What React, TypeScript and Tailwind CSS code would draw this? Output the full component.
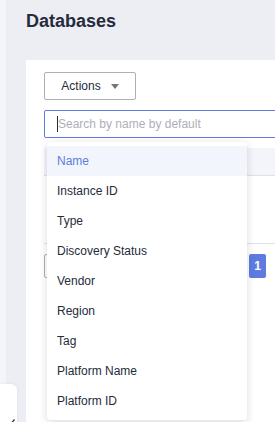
import React from "react";

const items = [
  "Name",
  "Instance ID",
  "Type",
  "Discovery Status",
  "Vendor",
  "Region",
  "Tag",
  "Platform Name",
  "Platform ID",
];

export default function App() {
  return (
    <div
      className="relative w-[275px] h-[422px] overflow-hidden bg-[#eceef3] flex"
      style={{ fontFamily: '"Liberation Sans", Arial, sans-serif' }}
    >
      <div className="w-[6px] shrink-0 bg-[#f4f5f8]" />
      <div className="flex-1 flex flex-col pl-[20px] min-w-0">
        <h1 className="pt-[9px] h-[33px] text-[18px] leading-[24px] font-bold text-[#252b3a]">
          Databases
        </h1>
        <div className="mt-[27px] w-[800px] flex-1 bg-white pl-[18px] pt-[12px] flex flex-col">
          <button className="w-[92px] h-[28px] border border-[#adb0b8] rounded-[2px] flex items-center justify-center gap-[10px] text-[12px] text-[#252b3a]">
            <span>Actions</span>
            <svg width="8" height="5" viewBox="0 0 8 5">
              <path d="M0 0 L8 0 L4 5 Z" fill="#71757f" />
            </svg>
          </button>
          <div className="mt-[10px] h-[28px] border border-[#5e7ce0] rounded-[2px] flex items-center pl-[12px]">
            <span className="w-px h-[16px] bg-[#252b3a]" />
            <span className="text-[12px] text-[#adb0b8]">Search by name by default</span>
          </div>
          <div className="mt-[10px] h-[28px] bg-[#f3f5fb] border-b border-[#dfe1e6]" />
          <div className="h-[68px] border-b border-[#dfe1e6]" />
          <div className="mt-[10px] h-[24px] w-[222px] flex justify-between">
            <div className="w-[40px] h-[24px] border border-[#adb0b8] rounded-[2px]" />
            <div className="w-[17px] h-[24px] bg-[#5e7ce0] rounded-[2px] flex items-center justify-center text-white text-[12px] font-bold">
              1
            </div>
          </div>
        </div>
      </div>

      <div className="absolute left-[47px] top-[142px] w-[200px] h-[278px] bg-white rounded-[4px] shadow-[0_2px_8px_rgba(0,0,0,0.15)] py-[4px] flex flex-col">
        {items.map((t, i) => (
          <div
            key={t}
            className={
              i === 0
                ? "h-[30px] shrink-0 flex items-center px-[10px] text-[12px] bg-[#f2f5fc] text-[#5e7ce0]"
                : "h-[30px] shrink-0 flex items-center px-[10px] text-[12px] text-[#252b3a]"
            }
          >
            {t}
          </div>
        ))}
      </div>

      <div className="absolute left-0 top-[384px] w-[17px] h-[50px] bg-white rounded-tr-[6px] shadow-[0_0_4px_rgba(0,0,0,0.06)]">
        <svg className="absolute left-[10px] top-[35px]" width="6" height="8" viewBox="0 0 6 8">
          <path d="M4.5 0.5 L1.5 4 L4.5 7.5" stroke="#252b3a" strokeWidth="1.2" fill="none" />
        </svg>
      </div>
    </div>
  );
}
